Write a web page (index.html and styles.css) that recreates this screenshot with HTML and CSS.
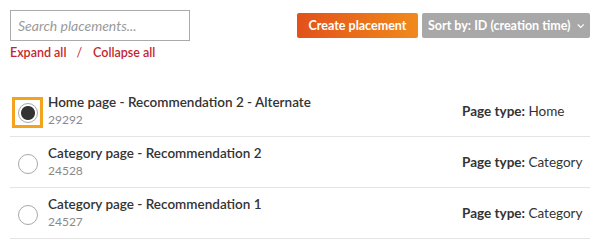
FILE: index.html
```html
<!DOCTYPE html>
<html lang="en">
<head>
    <meta charset="UTF-8" />
    <title>Placements</title>
    <link rel="stylesheet" href="styles.css">
</head>
<body>
    <div class="toolbar">
        <div class="search-col">
            <input type="text" class="search-input" placeholder="Search placements..." />
            <div class="expand-links">
                <a href="#">Expand all</a><span class="sep">/</span><a href="#">Collapse all</a>
            </div>
        </div>
        <div class="actions">
            <button class="btn btn-create">Create placement</button>
            <button class="btn btn-sort">Sort by: ID (creation time)
                <svg width="10" height="6" viewBox="0 0 10 6"><path d="M1 1l4 4 4-4" fill="none" stroke="#fff" stroke-width="1.5"/></svg>
            </button>
        </div>
    </div>

    <ul class="placement-list">
        <li class="placement-row">
            <span class="radio-wrap focused"><span class="radio checked"></span></span>
            <div class="placement-info">
                <div class="placement-name">Home page - Recommendation 2 - Alternate</div>
                <div class="placement-id">29292</div>
            </div>
            <div class="page-type"><b>Page type:</b> Home</div>
        </li>
        <li class="placement-row">
            <span class="radio-wrap"><span class="radio"></span></span>
            <div class="placement-info">
                <div class="placement-name">Category page - Recommendation 2</div>
                <div class="placement-id">24528</div>
            </div>
            <div class="page-type"><b>Page type:</b> Category</div>
        </li>
        <li class="placement-row">
            <span class="radio-wrap"><span class="radio"></span></span>
            <div class="placement-info">
                <div class="placement-name">Category page - Recommendation 1</div>
                <div class="placement-id">24527</div>
            </div>
            <div class="page-type"><b>Page type:</b> Category</div>
        </li>
    </ul>
</body>
</html>
```

FILE: styles.css
```css
* {
    box-sizing: border-box;
    margin: 0;
    padding: 0;
}

body {
    font-family: Lato, 'Open Sans', sans-serif;
    background: #ffffff;
    color: #333333;
    padding: 10px;
    width: 600px;
}

.toolbar {
    display: flex;
    justify-content: space-between;
    align-items: flex-start;
}

.search-input {
    width: 180px;
    height: 31px;
    padding: 0 7px;
    border: 1px solid #aaaaaa;
    font-family: inherit;
    font-size: 14px;
    outline: none;
}

.search-input::placeholder {
    color: #9a9a9a;
    font-style: italic;
}

.expand-links {
    margin-top: 4px;
    font-size: 12.5px;
    font-weight: 600;
}

.expand-links a {
    color: #c4262e;
    text-decoration: none;
}

.expand-links .sep {
    color: #c4262e;
    font-weight: 400;
    margin: 0 11px 0 10px;
}

.actions {
    display: flex;
    gap: 4px;
    margin-top: 3px;
}

.btn {
    height: 25px;
    border: none;
    border-radius: 2px;
    color: #ffffff;
    font-family: inherit;
    font-size: 12.5px;
    font-weight: 700;
    white-space: nowrap;
    cursor: pointer;
    display: flex;
    align-items: center;
    gap: 6px;
}

.btn-create {
    width: 121px;
    justify-content: center;
    background: linear-gradient(90deg, #e2511b, #f08a1c);
}

.btn-sort {
    width: 168px;
    background-color: #a8a8a8;
    padding: 0 6px 0 6px;
    justify-content: space-between;
}

.placement-list {
    list-style: none;
    margin-top: 26px;
}

.placement-row {
    display: flex;
    align-items: center;
    height: 51px;
    border-bottom: 1px solid #e4e4e4;
}

.radio-wrap {
    width: 31px;
    height: 31px;
    margin: 3px 5px 0 2px;
    display: flex;
    align-items: center;
    justify-content: center;
    border: 3px solid transparent;
}

.radio-wrap.focused {
    border-color: #f5a21c;
}

.radio {
    width: 20px;
    height: 20px;
    border: 1px solid #a8a8a8;
    border-radius: 50%;
    background: #ffffff;
}

.radio.checked {
    background: radial-gradient(circle, #333333 0, #333333 6.5px, #ffffff 7.5px);
}

.placement-info {
    flex: 1;
}

.placement-name {
    font-size: 13.5px;
    font-weight: 600;
    line-height: 18px;
}

.placement-id {
    font-size: 12px;
    color: #8a8a8a;
    line-height: 18px;
}

.page-type {
    width: 128px;
    font-size: 13.5px;
}

.page-type b {
    font-weight: 700;
}
```
